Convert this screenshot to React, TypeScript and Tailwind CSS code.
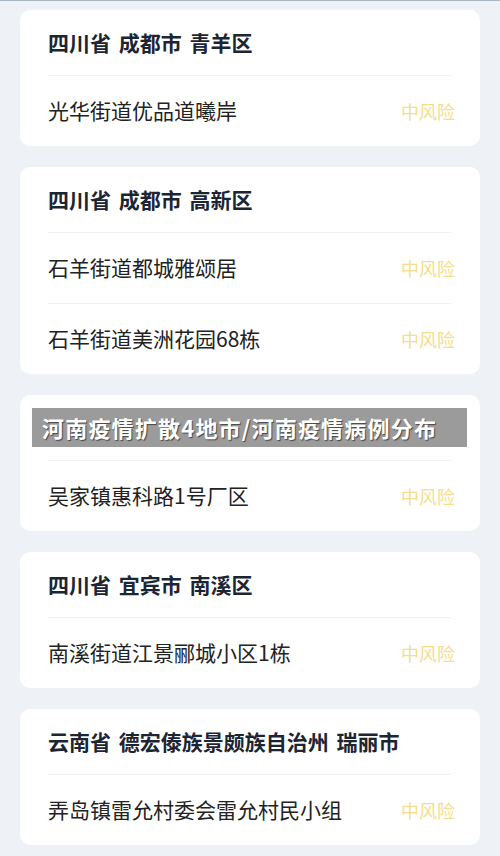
import React from "react";

type Area = {
  title: string;
  places: string[];
};

const areas: Area[] = [
  { title: "四川省 成都市 青羊区", places: ["光华街道优品道曦岸"] },
  { title: "四川省 成都市 高新区", places: ["石羊街道都城雅颂居", "石羊街道美洲花园68栋"] },
  { title: "四川省 成都市 双流区", places: ["吴家镇惠科路1号厂区"] },
  { title: "四川省 宜宾市 南溪区", places: ["南溪街道江景郦城小区1栋"] },
  { title: "云南省 德宏傣族景颇族自治州 瑞丽市", places: ["弄岛镇雷允村委会雷允村民小组"] },
];

export default function App() {
  return (
    <div
      className="relative min-h-[856px] w-[500px] border-t border-[#a9b8c3] bg-[#eef1f5] px-[20px] pt-[9px]"
      style={{ fontFamily: '"Noto Sans CJK SC", "Noto Sans", sans-serif' }}
    >
      <div className="flex flex-col gap-[21px]">
        {areas.map((area, index) => (
          <div key={index} className="rounded-[10px] bg-white px-[28px]">
            <div className="flex h-[65px] items-center text-[21px] font-bold text-[#1c2533] [word-spacing:3px]">
              {area.title}
            </div>
            {area.places.map((place, i) => (
              <div
                key={i}
                className="flex h-[71px] items-center justify-between border-t border-[#f1f2f4]"
              >
                <span className="text-[21px] text-[#222]">{place}</span>
                <span className="mr-[-3px] text-[18px] text-[#f5dd8c]">中风险</span>
              </div>
            ))}
          </div>
        ))}
      </div>

      <div className="absolute left-[32px] top-[407px] flex h-[39px] w-[435px] items-center bg-[#9b9b9b] pl-[10px]">
        <span className="text-[22px] font-bold tracking-[1.2px] text-white [text-shadow:1px_1px_1px_rgba(0,0,0,0.55)]">
          河南疫情扩散4地市/河南疫情病例分布
        </span>
      </div>
    </div>
  );
}
